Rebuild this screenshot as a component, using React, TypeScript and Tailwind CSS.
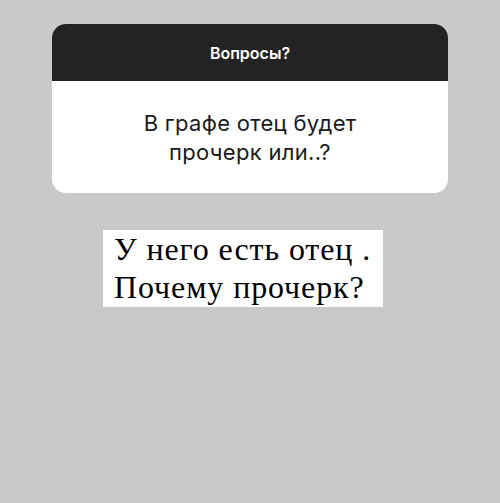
export default function App() {
  return (
    <div className="w-[500px] h-[503px] bg-[#c9c9c9] flex flex-col pt-[24px]">
      <div className="mx-[52px] w-[396px] rounded-[14px] overflow-hidden bg-white">
        <div className="h-[57px] bg-[#232323] flex items-center justify-center">
          <span
            style={{ fontFamily: "Inter, sans-serif" }}
            className="text-white text-[16px] font-semibold leading-none"
          >
            Вопросы?
          </span>
        </div>
        <div className="h-[112px] pt-[28px]">
          <p
            style={{ fontFamily: "Inter, sans-serif" }}
            className="text-[#1a1a1a] text-[22px] leading-[29px] text-center tracking-[0.3px]"
          >
            В графе отец будет
            <br />
            прочерк или..?
          </p>
        </div>
      </div>

      <div className="mt-[37px] ml-[103px] bg-white w-[280px] h-[77px] pl-[11px]">
        <p
          style={{ fontFamily: "'Liberation Serif', serif" }}
          className="text-black text-[32px] leading-[38px] tracking-[0.9px]"
        >
          У него есть отец .
          <br />
          Почему прочерк?
        </p>
      </div>
    </div>
  );
}
